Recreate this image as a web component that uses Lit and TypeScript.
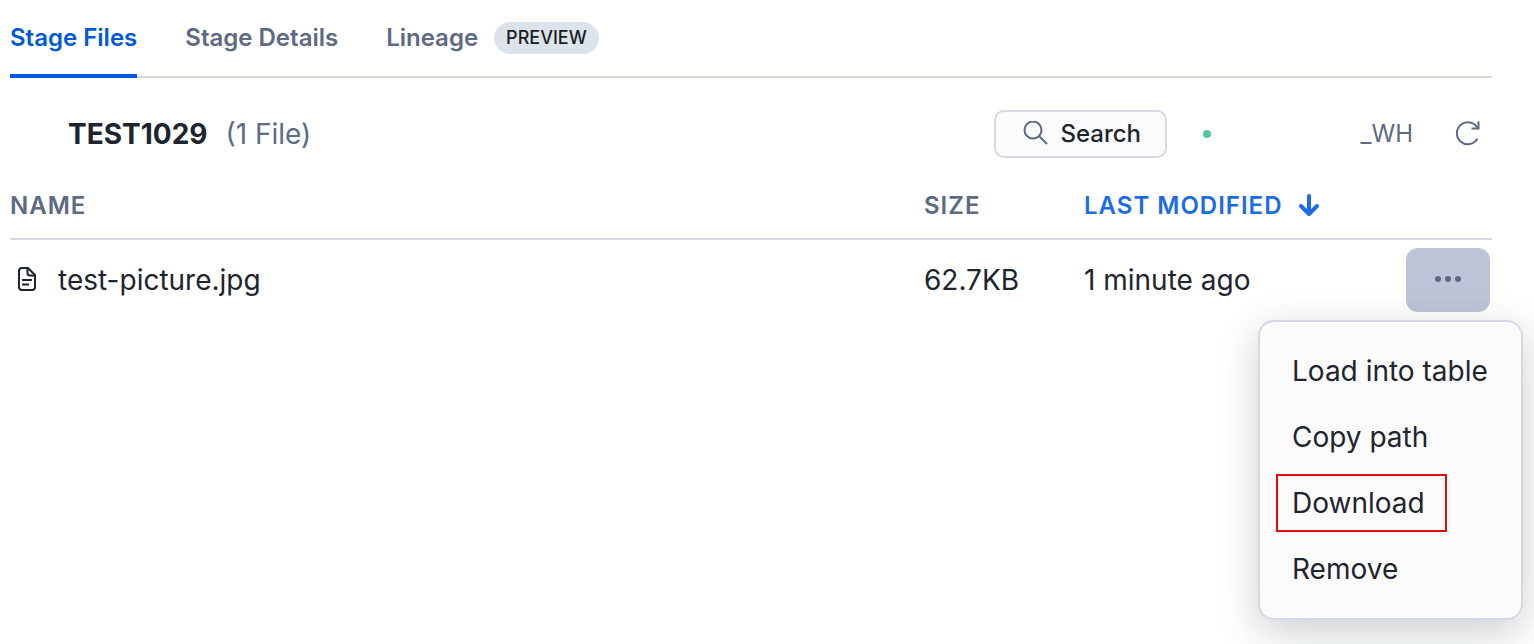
import { LitElement, html, css, svg } from "lit";
import { customElement, state } from "lit/decorators.js";
import { classMap } from "lit/directives/class-map.js";

interface StageFile {
  name: string;
  size: string;
  modified: string;
}

const searchIcon = svg`<svg class="icon" width="26" height="26" viewBox="0 0 26 26" fill="none" stroke="currentColor" stroke-width="2" aria-hidden="true">
  <circle cx="11" cy="9" r="8.5"/><path d="M17 15 25 23"/></svg>`;

const refreshIcon = svg`<svg class="icon" width="26" height="26" viewBox="0 0 26 26" fill="none" stroke="currentColor" stroke-width="2" aria-hidden="true">
  <path d="M22.4 17.8A11 11 0 1 1 22.4 6.7"/><path d="M23.5 .5V7.5H16.5"/></svg>`;

const arrowIcon = svg`<svg class="icon" width="22" height="24" viewBox="0 0 22 24" fill="none" stroke="currentColor" stroke-width="4" stroke-linecap="round" stroke-linejoin="round" aria-hidden="true">
  <path d="M11 2V19.5M3 12 11 20 19 12"/></svg>`;

const fileIcon = svg`<svg class="icon" width="20" height="26" viewBox="0 0 20 26" fill="none" stroke="currentColor" stroke-width="2" stroke-linejoin="round" aria-hidden="true">
  <path d="M11 1H5Q2 1 2 4V20Q2 23 5 23H15Q18 23 18 20V8Z"/><path d="M10.5 1V6Q10.5 8.5 13 8.5H18"/><path d="M5 13H15M5 17.5H12"/></svg>`;

const moreIcon = svg`<svg class="icon" width="28" height="8" viewBox="0 0 28 8" fill="currentColor" aria-hidden="true">
  <circle cx="4" cy="3" r="3"/><circle cx="14" cy="3" r="3"/><circle cx="24" cy="3" r="3"/></svg>`;

@customElement("app-root")
export class AppRoot extends LitElement {
  static styles = css`
    :host {
      display: block;
      box-sizing: border-box;
      min-height: 100vh;
      padding: 0 42px 0 10px;
      background: #fff;
      color: #1e252f;
      font-family: Inter, "Liberation Sans", sans-serif;
      font-size: 28px;
      line-height: 34px;
    }
    *, *::before { box-sizing: border-box; }
    button {
      margin: 0;
      padding: 0;
      border: 0;
      background: none;
      color: inherit;
      font: inherit;
      letter-spacing: inherit;
      cursor: pointer;
    }
    .icon { display: block; flex: none; }
    .tabs {
      display: flex;
      gap: 48px;
      height: 78px;
      box-shadow: inset 0 -2px #d5d9e5;
    }
    .tab {
      display: flex;
      align-items: center;
      gap: 16px;
      padding-top: 1px;
      border-bottom: 4px solid transparent;
      color: #5d6a85;
      font-size: 24px;
      font-weight: 600;
      white-space: nowrap;
    }
    .tab.active { color: #0259db; border-color: #0259db; }
    .badge {
      padding: 0 12px;
      border-radius: 16px;
      background: #dde3ea;
      color: #191e24;
      font-size: 18px;
      font-weight: 500;
      line-height: 32px;
    }
    .toolbar {
      display: flex;
      align-items: center;
      height: 48px;
      margin: 32px 0 24px;
      padding: 0 11px 0 58px;
    }
    .title { margin: 0; font-size: 28px; font-weight: 700; }
    .count { margin-left: 18px; color: #5d6a85; }
    .search {
      display: flex;
      align-items: center;
      gap: 12px;
      height: 48px;
      margin-left: auto;
      padding: 0 24px 0 26px;
      border: 2px solid #d5d9e5;
      border-radius: 10px;
      background: #fbfbfb;
      font-size: 24px;
      font-weight: 500;
    }
    .search .icon, .refresh { color: #5d6a85; }
    .warehouse {
      display: flex;
      align-items: center;
      justify-content: space-between;
      width: 210px;
      margin: 0 42px 0 36px;
      color: #5d6a85;
      font-size: 24px;
    }
    .status { width: 8px; height: 8px; border-radius: 50%; background: #50cba0; }
    .files { width: 100%; border-collapse: separate; border-spacing: 0; table-layout: fixed; }
    .size { width: 160px; }
    .modified { width: 322px; }
    .actions { width: 86px; }
    .head {
      height: 58px;
      padding: 0 0 8px;
      border-bottom: 2px solid #d5d9e5;
      color: #5d6a85;
      font-size: 24px;
      font-weight: 600;
      letter-spacing: 1px;
      text-align: left;
    }
    .sort { display: flex; align-items: center; gap: 16px; color: #1a6ce7; }
    .cell { height: 80px; padding: 0; }
    .name { display: flex; align-items: center; gap: 21px; padding-left: 7px; }
    .anchor { position: relative; width: 84px; }
    .more {
      display: flex;
      align-items: center;
      justify-content: center;
      width: 84px;
      height: 64px;
      border-radius: 12px;
      background: #bdc4d7;
      color: #5d6a85;
    }
    .menu {
      position: absolute;
      top: 72px;
      right: -33px;
      min-width: 265px;
      margin: 0;
      padding: 16px 0;
      border: 2px solid #d5d9e5;
      border-radius: 16px;
      background: #fbfbfb;
      box-shadow: 0 12px 40px rgba(25, 30, 36, 0.22);
    }
    .item {
      display: flex;
      align-items: center;
      width: 100%;
      height: 66px;
      padding: 0 32px;
      white-space: nowrap;
    }
    .marked {
      margin-left: -16px;
      padding: 10px 20px 10px 14px;
      border: 2px solid #e60c0c;
    }
  `;

  @state() private activeTab = "Stage Files";
  @state() private menuOpen = true;

  private tabs = [
    { label: "Stage Files", badge: "" },
    { label: "Stage Details", badge: "" },
    { label: "Lineage", badge: "PREVIEW" },
  ];
  private files: StageFile[] = [
    { name: "test-picture.jpg", size: "62.7KB", modified: "1 minute ago" },
  ];
  private actions = ["Load into table", "Copy path", "Download", "Remove"];

  private renderMenu() {
    return html`<div class="menu" role="menu">
      ${this.actions.map(
        (a) => html`<button class="item" role="menuitem">
          <span class=${classMap({ marked: a === "Download" })}>${a}</span>
        </button>`
      )}
    </div>`;
  }

  render() {
    return html`
      <div class="tabs" role="tablist">
        ${this.tabs.map(
          (t) => html`<button
            class=${classMap({ tab: true, active: t.label === this.activeTab })}
            role="tab"
            aria-selected=${t.label === this.activeTab}
            @click=${() => (this.activeTab = t.label)}
          ><span>${t.label}</span>${t.badge ? html`<span class="badge">${t.badge}</span>` : ""}</button>`
        )}
      </div>
      <div class="toolbar">
        <h1 class="title">TEST1029</h1>
        <span class="count">(1 File)</span>
        <button class="search">${searchIcon}<span>Search</span></button>
        <button class="warehouse"><span class="status"></span><span>_WH</span></button>
        <button class="refresh" aria-label="Refresh">${refreshIcon}</button>
      </div>
      <table class="files">
        <thead>
          <tr>
            <th class="head">NAME</th>
            <th class="head size">SIZE</th>
            <th class="head modified" aria-sort="descending">
              <button class="sort"><span>LAST MODIFIED</span>${arrowIcon}</button>
            </th>
            <th class="head actions" aria-label="Actions"></th>
          </tr>
        </thead>
        <tbody>
          ${this.files.map(
            (f) => html`<tr>
              <td class="cell"><div class="name">${fileIcon}<span>${f.name}</span></div></td>
              <td class="cell">${f.size}</td>
              <td class="cell">${f.modified}</td>
              <td class="cell">
                <div class="anchor">
                  <button
                    class="more"
                    aria-label="More actions"
                    aria-haspopup="menu"
                    aria-expanded=${this.menuOpen}
                    @click=${() => (this.menuOpen = !this.menuOpen)}
                  >${moreIcon}</button>
                  ${this.menuOpen ? this.renderMenu() : ""}
                </div>
              </td>
            </tr>`
          )}
        </tbody>
      </table>
    `;
  }
}
